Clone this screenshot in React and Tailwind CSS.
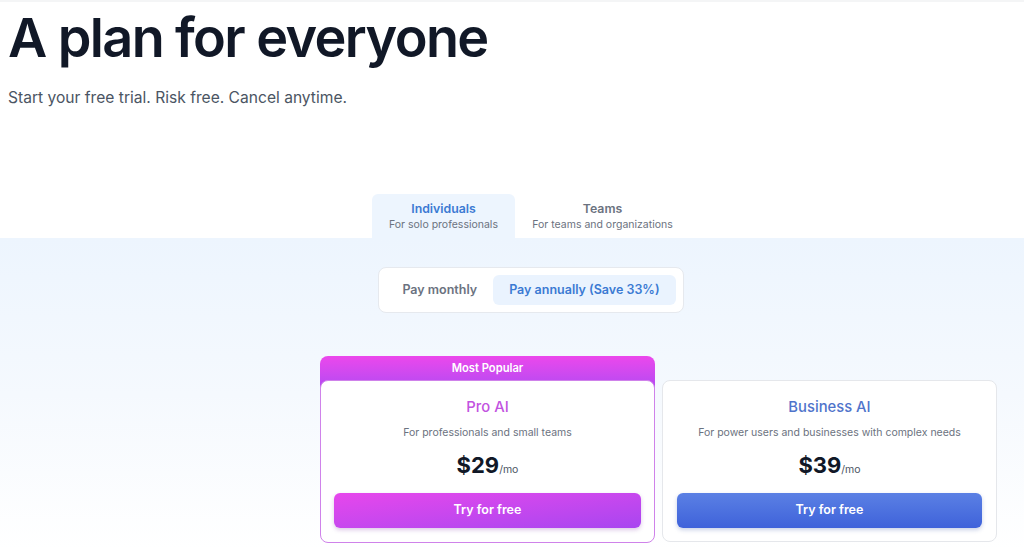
import React from "react";

export default function App() {
  const font = { fontFamily: "Inter, 'Noto Sans', sans-serif" };
  return (
    <div className="w-[1024px] h-[548px] overflow-hidden bg-white" style={font}>
      <div className="h-[2px] bg-[#f4f5f6]" />
      <div className="px-2">
        <h1 className="mt-[6px] text-[54px] leading-[60px] font-semibold tracking-[-0.03em] text-[#111827]">
          A plan for everyone
        </h1>
        <p className="mt-[18px] text-[15.6px] leading-6 text-[#4b5563]">
          Start your free trial. Risk free. Cancel anytime.
        </p>
      </div>

      <div className="mt-[84px] flex justify-center pl-[38px]">
        <div className="flex">
          <div className="w-[143px] h-[44px] rounded-t-md bg-[#edf5fe] flex flex-col items-center justify-center">
            <span className="text-[12.3px] leading-[17px] font-semibold text-[#3b7ad3]">Individuals</span>
            <span className="text-[10.5px] leading-[15px] text-[#6b7280]">For solo professionals</span>
          </div>
          <div className="w-[175px] h-[44px] flex flex-col items-center justify-center">
            <span className="text-[12.3px] leading-[17px] font-semibold text-[#6b7280]">Teams</span>
            <span className="text-[10.5px] leading-[15px] text-[#6b7280]">For teams and organizations</span>
          </div>
        </div>
      </div>

      <div className="h-[312px] bg-gradient-to-b from-[#edf5fe] via-[#f5f9fe] to-white">
        <div className="pt-[29px] flex justify-center pl-[38px]">
          <div className="flex p-[7px] bg-white border border-[#e6e9ee] rounded-lg">
            <div className="h-[30px] px-4 flex items-center text-[12.5px] font-semibold text-[#6b7280]">Pay monthly</div>
            <div className="h-[30px] px-4 flex items-center rounded-md bg-[#eaf3fe] text-[12.5px] font-semibold text-[#3b7ad3]">
              Pay annually (Save 33%)
            </div>
          </div>
        </div>

        <div className="mt-[43px] flex gap-[7px] pl-[320px] items-start">
          <div className="w-[335px]">
            <div className="h-[32px] rounded-t-lg bg-gradient-to-b from-[#ec47ec] to-[#b449f2] flex justify-center">
              <span className="mt-[4px] text-[11.2px] leading-[16px] font-semibold text-white">Most Popular</span>
            </div>
            <div className="-mt-[8px] relative rounded-lg border border-[#cf82ea] bg-white px-[13px] pt-[14px] pb-[14px] flex flex-col items-center">
              <div className="text-[14.8px] leading-6 font-medium text-[#c253df]">Pro AI</div>
              <div className="mt-[6px] text-[10.5px] leading-4 text-[#6b7280]">For professionals and small teams</div>
              <div className="mt-2 flex items-baseline">
                <span className="text-[22px] leading-8 font-bold text-[#111827]">$29</span>
                <span className="text-[10.5px] text-[#4b5563]">/mo</span>
              </div>
              <button className="mt-3 w-full h-[35px] rounded-md bg-gradient-to-br from-[#e746ec] to-[#a845f0] text-white text-[12.5px] font-semibold shadow-[0_2px_4px_rgba(120,40,160,0.25)]">
                Try for free
              </button>
            </div>
          </div>

          <div className="w-[335px] mt-[24px] rounded-lg border border-[#e5e7eb] bg-white px-[14px] pt-[14px] pb-[13px] flex flex-col items-center">
            <div className="text-[14.8px] leading-6 font-medium text-[#4f74cb]">Business AI</div>
            <div className="mt-[6px] text-[10.5px] leading-4 text-[#6b7280]">For power users and businesses with complex needs</div>
            <div className="mt-2 flex items-baseline">
              <span className="text-[22px] leading-8 font-bold text-[#111827]">$39</span>
              <span className="text-[10.5px] text-[#4b5563]">/mo</span>
            </div>
            <button className="mt-3 w-full h-[35px] rounded-md bg-gradient-to-b from-[#5b80e4] to-[#3f62da] text-white text-[12.5px] font-semibold shadow-[0_2px_4px_rgba(40,70,160,0.25)]">
              Try for free
            </button>
          </div>
        </div>
      </div>
    </div>
  );
}
